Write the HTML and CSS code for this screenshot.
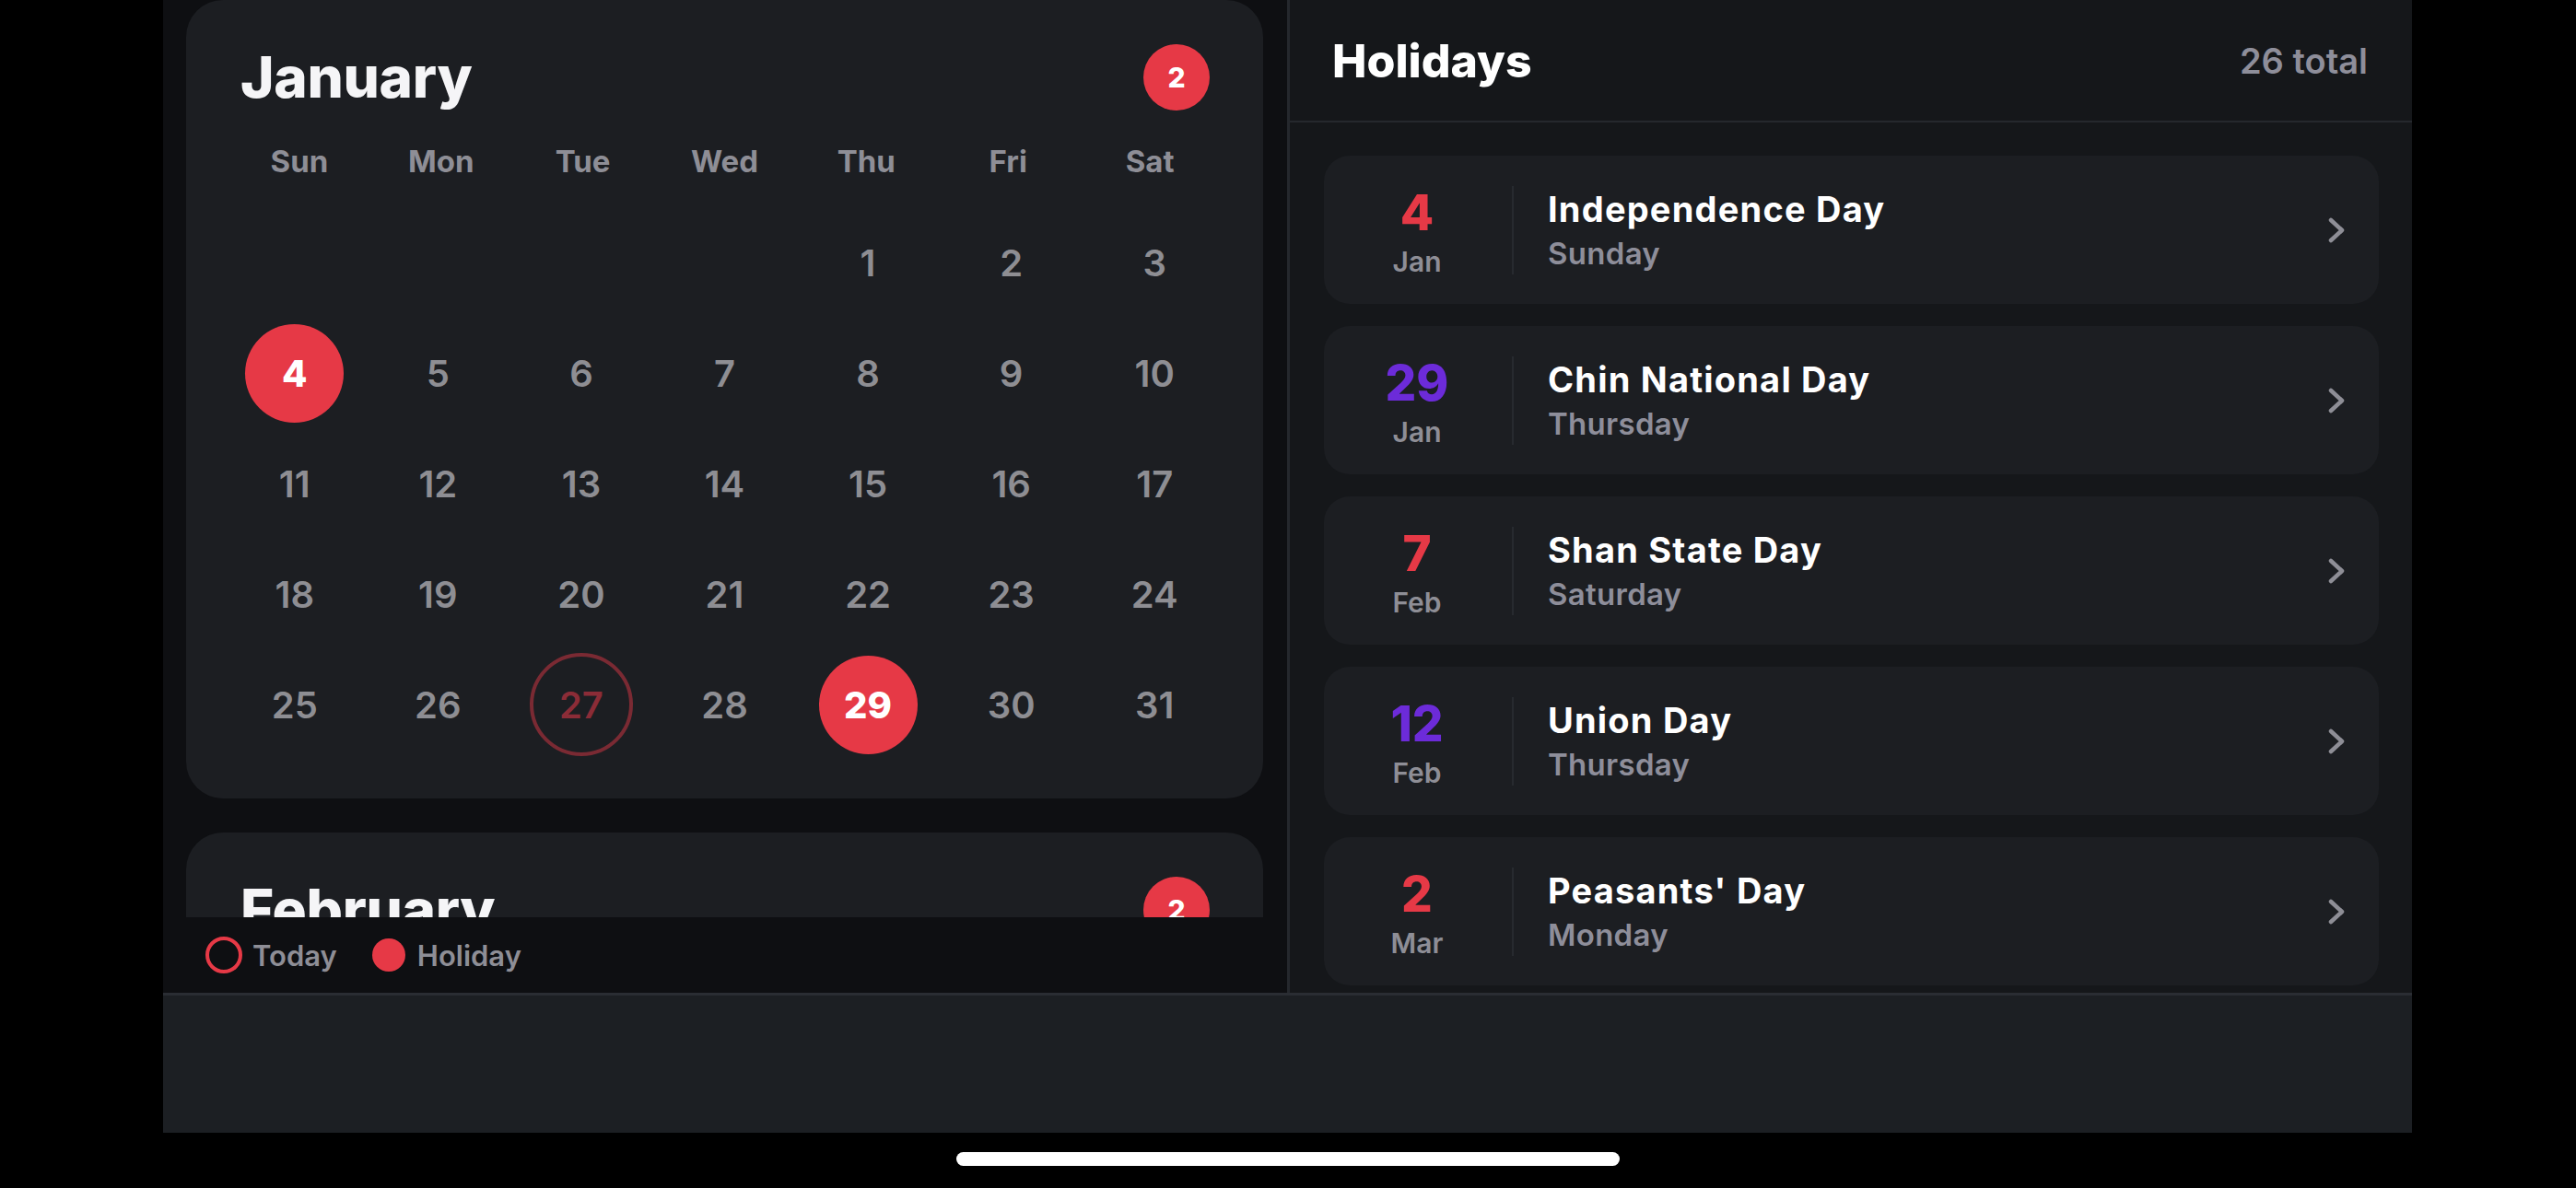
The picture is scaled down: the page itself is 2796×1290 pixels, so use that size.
FILE: index.html
```html
<!DOCTYPE html>
<html lang="en">
<head>
<meta charset="utf-8">
<title>Holidays Calendar</title>
<link rel="stylesheet" href="styles.css">
</head>
<body>
<div class="screen">
  <div class="main">
    <section class="left">
      <div class="scroll">
        <div class="month-card">
          <div class="month-head">
            <h2 class="month-name">January</h2>
            <div class="badge">2</div>
          </div>
          <div class="weekdays">
            <span>Sun</span><span>Mon</span><span>Tue</span><span>Wed</span><span>Thu</span><span>Fri</span><span>Sat</span>
          </div>
          <div class="days">
            <div class="day empty"></div><div class="day empty"></div><div class="day empty"></div><div class="day empty"></div>
            <div class="day"><span>1</span></div><div class="day"><span>2</span></div><div class="day"><span>3</span></div>
            <div class="day holiday"><span>4</span></div><div class="day"><span>5</span></div><div class="day"><span>6</span></div><div class="day"><span>7</span></div><div class="day"><span>8</span></div><div class="day"><span>9</span></div><div class="day"><span>10</span></div>
            <div class="day"><span>11</span></div><div class="day"><span>12</span></div><div class="day"><span>13</span></div><div class="day"><span>14</span></div><div class="day"><span>15</span></div><div class="day"><span>16</span></div><div class="day"><span>17</span></div>
            <div class="day"><span>18</span></div><div class="day"><span>19</span></div><div class="day"><span>20</span></div><div class="day"><span>21</span></div><div class="day"><span>22</span></div><div class="day"><span>23</span></div><div class="day"><span>24</span></div>
            <div class="day"><span>25</span></div><div class="day"><span>26</span></div><div class="day today"><span>27</span></div><div class="day"><span>28</span></div><div class="day holiday"><span>29</span></div><div class="day"><span>30</span></div><div class="day"><span>31</span></div>
          </div>
        </div>
        <div class="month-card partial">
          <div class="month-head">
            <h2 class="month-name">February</h2>
            <div class="badge">2</div>
          </div>
        </div>
      </div>
      <div class="legend">
        <div class="legend-item"><span class="ring"></span><span class="legend-label">Today</span></div>
        <div class="legend-item second"><span class="dot"></span><span class="legend-label">Holiday</span></div>
      </div>
    </section>
    <section class="right">
      <header class="right-head">
        <h1 class="right-title">Holidays</h1>
        <span class="total">26 total</span>
      </header>
      <div class="list">
        <div class="hcard">
          <div class="date"><span class="num red">4</span><span class="mon">Jan</span></div>
          <div class="vline"></div>
          <div class="info"><div class="name">Independence Day</div><div class="dow">Sunday</div></div>
          <svg class="chev" width="20" height="30" viewBox="0 0 20 30"><path d="M4 4 L16 15 L4 26" fill="none" stroke="#8e8e96" stroke-width="4.5" stroke-linecap="round" stroke-linejoin="round"/></svg>
        </div>
        <div class="hcard">
          <div class="date"><span class="num purple">29</span><span class="mon">Jan</span></div>
          <div class="vline"></div>
          <div class="info"><div class="name">Chin National Day</div><div class="dow">Thursday</div></div>
          <svg class="chev" width="20" height="30" viewBox="0 0 20 30"><path d="M4 4 L16 15 L4 26" fill="none" stroke="#8e8e96" stroke-width="4.5" stroke-linecap="round" stroke-linejoin="round"/></svg>
        </div>
        <div class="hcard">
          <div class="date"><span class="num red">7</span><span class="mon">Feb</span></div>
          <div class="vline"></div>
          <div class="info"><div class="name">Shan State Day</div><div class="dow">Saturday</div></div>
          <svg class="chev" width="20" height="30" viewBox="0 0 20 30"><path d="M4 4 L16 15 L4 26" fill="none" stroke="#8e8e96" stroke-width="4.5" stroke-linecap="round" stroke-linejoin="round"/></svg>
        </div>
        <div class="hcard">
          <div class="date"><span class="num purple">12</span><span class="mon">Feb</span></div>
          <div class="vline"></div>
          <div class="info"><div class="name">Union Day</div><div class="dow">Thursday</div></div>
          <svg class="chev" width="20" height="30" viewBox="0 0 20 30"><path d="M4 4 L16 15 L4 26" fill="none" stroke="#8e8e96" stroke-width="4.5" stroke-linecap="round" stroke-linejoin="round"/></svg>
        </div>
        <div class="hcard">
          <div class="date"><span class="num red">2</span><span class="mon">Mar</span></div>
          <div class="vline"></div>
          <div class="info"><div class="name">Peasants' Day</div><div class="dow">Monday</div></div>
          <svg class="chev" width="20" height="30" viewBox="0 0 20 30"><path d="M4 4 L16 15 L4 26" fill="none" stroke="#8e8e96" stroke-width="4.5" stroke-linecap="round" stroke-linejoin="round"/></svg>
        </div>
      </div>
    </section>
  </div>
  <div class="bottom"></div>
</div>
<div class="home"></div>
</body>
</html>
```
FILE: styles.css
```css
* { box-sizing: border-box; margin: 0; padding: 0; }
html, body { width: 2796px; height: 1290px; overflow: hidden; }
body {
  background: #000;
  font-family: "Inter", "Liberation Sans", sans-serif;
  display: flex;
  flex-direction: column;
}
.screen {
  margin-left: 177px;
  width: 2441px;
  height: 1230px;
  display: flex;
  flex-direction: column;
}
.main { height: 1078px; display: flex; }
.left {
  width: 1223px;
  background: #0e0f12;
  border-right: 3px solid #25282d;
  display: flex;
  flex-direction: column;
}
.scroll {
  height: 996px;
  overflow: hidden;
  padding: 0 26px 0 25px;
  display: flex;
  flex-direction: column;
  gap: 37px;
}
.month-card {
  flex-shrink: 0;
  background: #1c1e22;
  border-radius: 40px;
  padding: 48px 0 42px;
}
.month-card.partial { min-height: 400px; }
.month-head {
  height: 72px;
  display: flex;
  align-items: center;
  justify-content: space-between;
  padding: 0 58px 0 59px;
}
.month-name {
  font-size: 62px;
  line-height: 1;
  font-weight: 800;
  color: #f5f5f7;
  letter-spacing: -0.3px;
}
.badge {
  width: 72px;
  height: 72px;
  border-radius: 50%;
  background: #e63946;
  color: #fff;
  font-size: 30px;
  font-weight: 800;
  display: flex;
  align-items: center;
  justify-content: center;
}
.weekdays {
  margin-top: 30px;
  height: 50px;
  display: grid;
  grid-template-columns: repeat(7, 1fr);
  padding: 0 46px;
  align-items: center;
  text-align: center;
  font-size: 33px;
  font-weight: 700;
  color: #8e8e96;
}
.days {
  margin-top: 25px;
  display: grid;
  grid-template-columns: repeat(7, 1fr);
  grid-auto-rows: 120px;
  padding: 0 40px;
}
.day {
  display: flex;
  align-items: center;
  justify-content: center;
  font-size: 40px;
  font-weight: 600;
  color: #8e8e93;
}
.day span {
  width: 107px;
  height: 107px;
  border-radius: 50%;
  display: flex;
  align-items: center;
  justify-content: center;
}
.day.holiday span { background: #e63946; color: #fff; font-weight: 800; }
.day.today span {
  width: 112px;
  height: 112px;
  border: 4px solid #7a2a33;
  color: #8b2c37;
}
.legend {
  height: 82px;
  display: flex;
  align-items: center;
  padding-left: 46px;
}
.legend-item { display: flex; align-items: center; }
.legend-item.second { margin-left: 38px; }
.ring { width: 40px; height: 40px; border: 4px solid #e63946; border-radius: 50%; }
.dot { width: 36px; height: 36px; background: #e63946; border-radius: 50%; }
.legend-label {
  font-size: 31px;
  font-weight: 600;
  color: #8e8e96;
  margin-left: 11px;
}
.second .legend-label { margin-left: 13px; }

.right {
  flex: 1;
  background: #15171a;
  display: flex;
  flex-direction: column;
}
.right-head {
  height: 133px;
  flex-shrink: 0;
  border-bottom: 2px solid #25282d;
  display: flex;
  align-items: center;
  justify-content: space-between;
  padding: 0 48px 0 46px;
}
.right-title { font-size: 50px; font-weight: 800; color: #fff; line-height: 1; }
.total { font-size: 38px; font-weight: 600; color: #8e8e9a; }
.list {
  flex: 1;
  overflow: hidden;
  padding: 36px 36px 0 37px;
  display: flex;
  flex-direction: column;
  gap: 24px;
}
.hcard {
  height: 161px;
  flex-shrink: 0;
  background: #1c1e22;
  border-radius: 28px;
  display: flex;
  align-items: center;
  padding: 0 36px;
}
.date {
  width: 130px;
  padding-top: 5px;
  display: flex;
  flex-direction: column;
  align-items: center;
}
.num { font-size: 53px; line-height: 1; font-weight: 800; }
.num.red { color: #e63946; }
.num.purple { color: #6c2bd9; }
.mon {
  font-size: 30px;
  line-height: 1;
  font-weight: 600;
  color: #8e8e96;
  margin-top: 11px;
}
.vline { width: 2px; height: 96px; background: #272a2f; margin: 0 37px 0 38px; }
.info { flex: 1; }
.name { font-size: 38px; line-height: 44px; font-weight: 700; color: #fff; letter-spacing: 1.2px; }
.dow { font-size: 33px; line-height: 38px; font-weight: 600; color: #8e8e9a; margin-top: 7px; letter-spacing: 0.3px; }
.chev { flex-shrink: 0; }

.bottom {
  flex: 1;
  background: #1c1f23;
  border-top: 3px solid #2a2d33;
}
.home {
  width: 720px;
  height: 15px;
  border-radius: 8px;
  background: #fff;
  margin: 21px auto 0;
}
```
